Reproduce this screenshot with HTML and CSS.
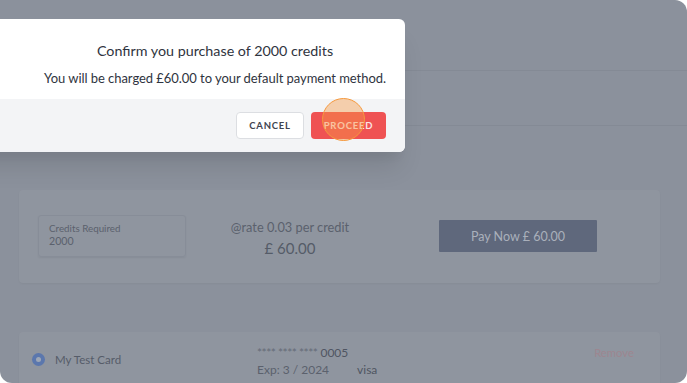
FILE: index.html
```html
<!DOCTYPE html>
<html lang="en">
<head>
<meta charset="utf-8">
<title>Purchase credits</title>
<link rel="stylesheet" href="styles.css">
</head>
<body>
<div class="frame">
  <header class="topbar"></header>
  <nav class="subbar"></nav>
  <main class="content">
    <section class="card purchase">
      <div class="field">
        <span class="field-label">Credits Required</span>
        <span class="field-value">2000</span>
      </div>
      <div class="rate">
        <p class="rate-line">@rate 0.03 per credit</p>
        <p class="rate-total">£ 60.00</p>
      </div>
      <button class="pay">Pay Now £ 60.00</button>
    </section>
    <section class="card method">
      <div class="method-name">
        <span class="radio"></span>
        <span class="name">My Test Card</span>
      </div>
      <div class="method-info">
        <span class="number"><span class="stars">**** **** ****</span> 0005</span>
        <span class="exp-row"><span class="exp">Exp: 3 / 2024</span><span class="brand">visa</span></span>
      </div>
      <a class="remove">Remove</a>
    </section>
  </main>

  <div class="modal">
    <div class="modal-body">
      <h2 class="modal-title">Confirm you purchase of 2000 credits</h2>
      <p class="modal-text">You will be charged £60.00 to your default payment method.</p>
    </div>
    <div class="modal-footer">
      <button class="btn btn-cancel">CANCEL</button>
      <button class="btn btn-proceed">PROCEED</button>
    </div>
  </div>
  <span class="click-marker"></span>
</div>
</body>
</html>
```
FILE: styles.css
```css
* { box-sizing: border-box; }
html, body { margin: 0; padding: 0; background: #ffffff; }
body {
  font-family: "Lato", "Noto Sans", sans-serif;
  width: 687px;
  height: 383px;
  overflow: hidden;
}
.frame {
  position: relative;
  width: 687px;
  height: 383px;
  overflow: hidden;
  background: #8b919c;
  border-radius: 0 12px 12px 12px;
}
.topbar {
  height: 71px;
  border-bottom: 1px solid #848a95;
}
.subbar {
  height: 55px;
  border-bottom: 1px solid #848a95;
}
.content {
  padding: 64px 27px 0 19px;
  display: flex;
  flex-direction: column;
  gap: 49px;
}
.card {
  background: #8f959f;
  border-radius: 4px;
  box-shadow: 0 1px 2px rgba(0,0,0,0.04);
}
.purchase {
  height: 93px;
  display: flex;
  align-items: flex-start;
  padding: 25px 0 0 19px;
}
.field {
  width: 148px;
  height: 42px;
  border: 1px solid #878d98;
  border-radius: 3px;
  box-shadow: 0 1px 2px rgba(0,0,0,0.06);
  display: flex;
  flex-direction: column;
  padding: 6px 0 0 10px;
  color: #5b616d;
  line-height: 13px;
}
.field-label { font-size: 9.8px; }
.field-value { font-size: 10.6px; }
.rate {
  width: 208px;
  text-align: center;
  color: #5b616d;
  padding-top: 3px;
}
.rate p { margin: 0; }
.rate-line { font-size: 12.8px; line-height: 18px; }
.rate-total { font-size: 15px; line-height: 24px; color: #555c68; }
.pay {
  margin: 5px 0 0 45px;
  width: 158px;
  height: 32px;
  border: none;
  border-radius: 1px;
  background: #5f687c;
  color: #aab0bb;
  font-family: inherit;
  font-size: 12.5px;
}
.method {
  height: 60px;
  display: flex;
  align-items: flex-start;
  padding: 12px 26px 0 13px;
}
.method-name {
  width: 225px;
  display: flex;
  align-items: center;
  gap: 10px;
  align-self: flex-start;
  margin-top: 9px;
}
.radio {
  width: 13px;
  height: 13px;
  border-radius: 50%;
  background: #5b77ad;
  display: flex;
  align-items: center;
  justify-content: center;
}
.radio::after {
  content: "";
  width: 5px;
  height: 5px;
  border-radius: 50%;
  background: #9ea7b6;
}
.name { font-size: 11.5px; color: #565c69; }
.method-info {
  display: flex;
  flex-direction: column;
  font-size: 12px;
  line-height: 17px;
  color: #5b616d;
}
.stars { color: #656b77; letter-spacing: -0.5px; }
.number { color: #4f5562; }
.exp-row { display: flex; gap: 28px; }
.brand { color: #4f5562; }
.remove {
  margin-left: auto;
  font-size: 11.3px;
  color: #9d8690;
  line-height: 17px;
}

.modal {
  position: absolute;
  top: 19px;
  left: -60px;
  width: 465px;
  height: 133px;
  background: #ffffff;
  border-radius: 6px;
  overflow: hidden;
  box-shadow: 0 20px 25px -5px rgba(0,0,0,0.10), 0 10px 10px -5px rgba(0,0,0,0.04);
  display: flex;
  flex-direction: column;
}
.modal-body {
  height: 80px;
  padding: 21px 0 0 85px;
  text-align: center;
  color: #2f3440;
}
.modal-title {
  margin: 0;
  font-size: 14.3px;
  font-weight: 400;
  line-height: 22px;
}
.modal-text {
  margin: 7px 0 0;
  font-size: 13px;
  letter-spacing: -0.05px;
  line-height: 18px;
}
.modal-footer {
  flex: 1;
  background: #f3f4f6;
  display: flex;
  justify-content: flex-end;
  align-items: flex-start;
  gap: 7px;
  padding: 13px 19px 0 0;
}
.btn {
  height: 27px;
  border-radius: 4px;
  font-family: inherit;
  font-size: 9.5px;
  font-weight: 700;
  letter-spacing: 0.8px;
  padding: 0;
}
.btn-cancel {
  width: 68px;
  background: #ffffff;
  border: 1px solid #dcdee2;
  color: #3f4450;
}
.btn-proceed {
  width: 75px;
  background: #ef5253;
  border: none;
  color: #fbe3e3;
}
.click-marker {
  position: absolute;
  left: 322px;
  top: 98px;
  width: 43px;
  height: 43px;
  border-radius: 50%;
  background: rgba(246, 152, 70, 0.42);
  border: 1.5px solid #f6993d;
}
```
